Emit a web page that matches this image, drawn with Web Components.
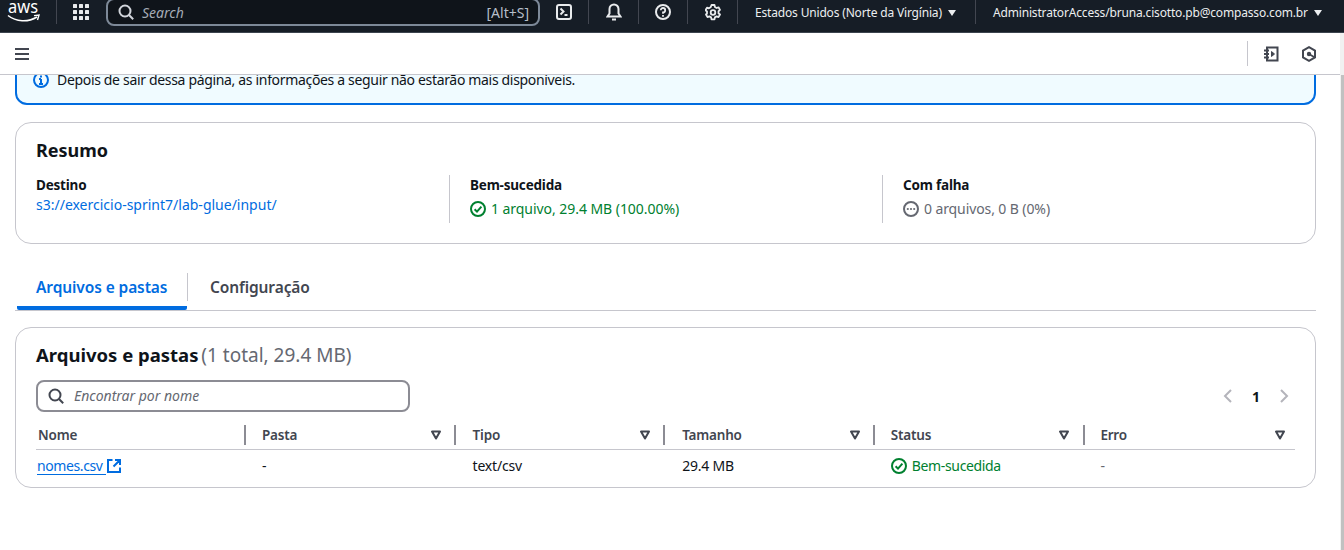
<!DOCTYPE html>
<html lang="pt"><head><meta charset="utf-8"><title>Status de upload</title>
<style>
html,body{margin:0;padding:0;height:550px;overflow:hidden;background:#fff}
body{font-family:"Noto Sans","Liberation Sans",sans-serif;font-size:14px;color:#0f141a}
</style></head><body>
<aws-app></aws-app>
<script>
const I={
 check:`<svg width="16" height="16" viewBox="0 0 16 16" fill="none" stroke="currentColor" stroke-width="2"><circle cx="8" cy="8" r="7"/><path d="M4.6 8.2 7 10.6l4.4-5"/></svg>`,
 more:`<svg width="16" height="16" viewBox="0 0 16 16" fill="none" stroke="currentColor" stroke-width="2"><circle cx="8" cy="8" r="7"/><g fill="currentColor" stroke="none"><circle cx="4.8" cy="8" r="1.1"/><circle cx="8" cy="8" r="1.1"/><circle cx="11.2" cy="8" r="1.1"/></g></svg>`,
 search:`<svg width="16" height="16" viewBox="0 0 16 16" fill="none" stroke="currentColor" stroke-width="2"><circle cx="7" cy="7" r="5.5"/><path d="m11 11 4.2 4.2"/></svg>`,
 filter:`<svg width="12" height="12" viewBox="0 0 12 12" fill="none" stroke="currentColor" stroke-width="2" stroke-linejoin="round"><path d="M2 2.5h8L6 9.5z"/></svg>`
};
function def(name,css,html){
 customElements.define(name,class extends HTMLElement{
  constructor(){super();this.attachShadow({mode:'open'}).innerHTML=`<style>${css}</style>${html}`;}
 });
}
def('top-nav',`
 :host{display:flex;align-items:center;height:24px;padding-bottom:8px;background:#161d26;border-bottom:1px solid #3c444e;color:#fff;font-size:12px;white-space:nowrap;flex:none}
 .logo{width:50px;padding-left:6px;height:24px;display:flex;flex:none}
 .sep{width:1px;height:24px;background:#424650;flex:none}
 .grid{margin:0 17px 0 16px;display:flex;color:#e9ebed;flex:none}
 .search{width:430px;height:24px;border:2px solid #7d8998;border-radius:8px;background:#0f141a;display:flex;align-items:center;color:#b6bec9;flex:none}
 .search svg{margin-left:10px;color:#d1d5db}
 .search i{margin-left:8px;font-size:14px;flex:1;color:#a4abb5}
 .search span{margin-right:9px;font-size:14px}
 .ic{height:24px;display:flex;align-items:center;justify-content:center;color:#e9ebed;flex:none}
 .w48{width:48px}.w49{width:49px}
 .t{color:#eceef0;letter-spacing:-.17px;margin-left:17px;flex:none}
 .tri{display:inline-block;width:0;height:0;border:4.5px solid transparent;border-top:6px solid #eceef0;border-bottom:0;margin-left:6px;vertical-align:1px}
`,`
 <div class="logo"><svg width="36" height="24" viewBox="0 0 36 24"><text x="2" y="12.500" font-family="Noto Sans,sans-serif" font-size="18" fill="#fff" textLength="30" lengthAdjust="spacingAndGlyphs">aws</text><path d="M2 15.500c8 6.500 20 7 29 1.500" fill="none" stroke="#fff" stroke-width="1.500"/><path d="M28 15.600 33 15 31.500 20" fill="none" stroke="#fff" stroke-width="1.400"/></svg></div>
 <div class="sep"></div>
 <div class="grid"><svg width="16" height="16" viewBox="0 0 16 16" fill="currentColor"><rect width="4" height="4" rx=".5"/><rect x="6" width="4" height="4" rx=".5"/><rect x="12" width="4" height="4" rx=".5"/><rect y="6" width="4" height="4" rx=".5"/><rect x="6" y="6" width="4" height="4" rx=".5"/><rect x="12" y="6" width="4" height="4" rx=".5"/><rect y="12" width="4" height="4" rx=".5"/><rect x="6" y="12" width="4" height="4" rx=".5"/><rect x="12" y="12" width="4" height="4" rx=".5"/></svg></div>
 <div class="search">${I.search}<i>Search</i><span>[Alt+S]</span></div>
 <div class="ic w48"><svg width="16" height="16" viewBox="0 0 16 16" fill="none" stroke="currentColor" stroke-width="2"><rect x="1" y="1" width="14" height="14" rx="2"/><path d="m4.500 4.500 3 3-3 3M8.500 11h3"/></svg></div><div class="sep"></div>
 <div class="ic w49"><svg width="16" height="18" viewBox="0 0 16 18" fill="none" stroke="currentColor" stroke-width="2"><path d="M1.500 13.500h13l-2-3V6a4.500 4.500 0 0 0-9 0v4.500zM6 16.500h4"/></svg></div><div class="sep"></div>
 <div class="ic w48"><svg width="16" height="16" viewBox="0 0 16 16" fill="none" stroke="currentColor" stroke-width="2"><circle cx="8" cy="8" r="7"/><path d="M5.800 6.200A2.200 2.200 0 1 1 8 8.400v1.300" stroke-width="1.800"/><path d="M8 11v1.800" stroke-width="1.800"/></svg></div><div class="sep"></div>
 <div class="ic w49"><svg width="16" height="17" viewBox="0 0 16 17" fill="none" stroke="currentColor" stroke-width="1.800" stroke-linejoin="round"><circle cx="8" cy="8.500" r="2.300"/><path d="M6.500 1h3l.4 2 1.700 1 1.900-.7 1.500 2.600-1.500 1.300v2l1.500 1.300-1.500 2.600-1.900-.7-1.700 1-.4 2h-3l-.4-2-1.700-1-1.900.7-1.500-2.600L2 9.500v-2L.5 6.200 2 3.600l1.900.7 1.700-1z"/></svg></div><div class="sep"></div>
 <div class="t" style="width:220px">Estados Unidos (Norte da Virgínia)<span class="tri"></span></div>
 <div class="sep"></div>
 <div class="t">AdministratorAccess/bruna.cisotto.pb@compasso.com.br<span class="tri"></span></div>
`);
def('sub-nav',`
 :host{display:flex;align-items:center;justify-content:space-between;height:41px;background:#fff;border-bottom:1px solid #c6c6cd;padding:0 19px 0 14px;color:#424650;flex:none}
 .r{display:flex;align-items:center}
 .sep{width:1px;height:25px;background:#c6c6cd;margin-right:15px}
 svg{display:block}
`,`
 <svg width="16" height="14" viewBox="0 0 16 14" stroke="currentColor" stroke-width="2"><path d="M1 2h14M1 7h14M1 12h14"/></svg>
 <div class="r"><div class="sep"></div>
 <svg width="16" height="16" viewBox="0 0 16 16" fill="none" stroke="currentColor" stroke-width="2" style="margin-right:22px"><path d="M4 1.500h10.500v13H4zM1 4.500h5M1 8h5M1 11.500h5"/><path d="m8.500 5.500 3 2.500-3 2.500z" fill="currentColor" stroke-width="1"/></svg>
 <svg width="16" height="16" viewBox="0 0 16 16" fill="none" stroke="currentColor" stroke-width="2" style="margin-right:4px"><path d="M8 1.200 14 4.500v7L8 14.800 2 11.500v-7z"/><circle cx="8" cy="8" r="2.200" fill="currentColor" stroke="none"/><path d="m8 8 5 3" stroke-width="1.800"/></svg></div>
`);
def('flash-info',`
 :host{display:flex;align-items:flex-start;gap:8px;margin:-40px 0 0;height:70px;box-sizing:border-box;border:2px solid #006ce0;border-radius:12px;background:#f0fbff;padding:33px 0 0 16px;line-height:20px;letter-spacing:-.33px;flex:none}
 svg{color:#006ce0;margin-top:2px;flex:none}
`,`<svg width="16" height="16" viewBox="0 0 16 16" fill="none" stroke="currentColor" stroke-width="2"><circle cx="8" cy="8" r="7"/><path d="M8 7v5M6 12h4M6 7h2"/><path d="M8 3.500v2"/></svg><slot></slot>`);
def('app-card',`
 :host{display:block;border:1px solid #c6c6cd;border-radius:16px;background:#fff;box-sizing:border-box;flex:none}
`,`<slot></slot>`);
def('sum-col',`
 :host{display:block;box-sizing:border-box;line-height:20px}
 .k{font-weight:700;font-size:13.500px;letter-spacing:-.2px;color:#0f141a}
`,`<div class="k"><slot name="k"></slot></div><slot></slot>`);
def('status-line',`
 :host{display:flex;align-items:center;gap:5px;line-height:20px;color:var(--c,#00802f)}
 svg{flex:none}
`,`${I.check}<slot></slot>`);
def('tab-bar',`
 :host{display:flex;height:67px;border-bottom:1px solid #c6c6cd;align-items:flex-start;box-sizing:border-box;flex:none}
 .t{font-weight:600;font-size:15.500px;letter-spacing:-.1px;line-height:20px;padding-top:33px;box-sizing:border-box;height:66px}
 .a{color:#006ce0;width:170px;margin-left:2px;padding-left:19px;border-bottom:4px solid #006ce0;border-radius:0 0 2px 2px}
 .sep{width:1px;height:28px;background:#c6c6cd;margin-top:29px}
 .b{color:#424650;margin-left:22px}
`,`<div class="t a">Arquivos e pastas</div><div class="sep"></div><div class="t b">Configuração</div>`);
def('files-table',`
 :host{display:block;padding:0 20px;line-height:20px;letter-spacing:-.2px}
 .row{display:grid;grid-template-columns:209px 209.600px 209.600px 209.600px 209.600px 211px}
 .h{height:29px;border-bottom:1px solid #c6c6cd;align-items:center}
 .h>div{display:flex;align-items:center;height:20px;font-weight:600;color:#424650;font-size:13.500px;padding:0 3px 0 18px;position:relative;justify-content:space-between}
 .h>div:first-child{padding-left:2px}
 .h>div:nth-child(2),.h>div:nth-child(5),.h>div:nth-child(6){padding-left:17px}
 .h>div:last-child{padding-right:0}
 .h>div+div::before{content:"";position:absolute;left:-1px;top:0;height:20px;width:2px;background:#8c8c94}
 .h>div:last-child::before{left:0}
 .h svg{color:#424650;margin-right:10px}
 .h>div:last-child svg{margin-right:8px}
 .b{height:32px;align-items:center}
 .b>div{padding-left:17px}
 .b>div:nth-child(3),.b>div:nth-child(4){padding-left:18px}
 .b>div:first-child{padding-left:1px;display:flex;align-items:center}
 a{color:#006ce0;border-bottom:1px solid #006ce0;line-height:16px;padding-right:3px;margin-top:1px;letter-spacing:-.4px}
 .b>div:first-child svg{margin-top:-1px}
 .g{color:#656871}
 status-line{letter-spacing:-.35px}
`,`
 <div class="row h"><div>Nome</div><div>Pasta${I.filter}</div><div>Tipo${I.filter}</div><div>Tamanho${I.filter}</div><div>Status${I.filter}</div><div>Erro${I.filter}</div></div>
 <div class="row b"><div><a>nomes.csv</a><svg width="16" height="16" viewBox="0 0 16 16" fill="none" stroke="#006ce0" stroke-width="2"><path d="M6.500 2H2v12h12V9.500M9 2h5v5M14 2 7.500 8.500"/></svg></div><div>-</div><div>text/csv</div><div>29.4 MB</div><div><status-line>Bem-sucedida</status-line></div><div class="g">-</div></div>
`);
def('aws-app',`
 :host{display:flex;flex-direction:column;height:550px;overflow:hidden}
 .wrap{flex:1;display:flex;min-height:0}
 main{flex:1;overflow:hidden;padding:0 24px 0 15px;display:flex;flex-direction:column;min-width:0}
 .scroll{width:4px;background:#f1f1f1;flex:none;padding-top:42px;box-sizing:border-box}
 .scroll div{height:100%;width:3px;margin-left:1px;background:#c1c1c1}
 .rail{flex:1;display:flex;flex-direction:column;min-width:0}
 h2{font-size:18.500px;font-weight:700;line-height:24px;margin:0}
 .sum{margin-top:17px;height:122px;padding:15px 20px 0}
 .sum h2{font-size:18px}
 .cols{display:grid;grid-template-columns:413px 433px 1fr;margin-top:13px;height:48px}
 .cols sum-col+sum-col{border-left:1px solid #c6c6cd;padding-left:20px}
 a{color:#006ce0}
 .st{margin-top:4px;letter-spacing:-.05px}
 .gr{margin-top:4px;display:flex;align-items:center;gap:5px;color:#656871;letter-spacing:-.1px}
 .files{margin-top:16px;height:161px;padding-top:15px}
 .files h2{padding-left:20px}
 .files h2 span{font-weight:400;color:#656871;font-size:19px;margin-left:-2px}
 .tools{display:flex;justify-content:space-between;align-items:center;padding:0 20px;margin-top:13px;height:32px}
 .find{width:370px;height:28px;border:2px solid #8c8c94;border-radius:8px;display:flex;align-items:center;color:#424650}
 .find svg{margin-left:10px}
 .find i{margin-left:10px;color:#656871;font-size:14px;line-height:18px;margin-top:-1px}
 .pg{display:flex;align-items:center;gap:18px;font-weight:700;color:#0f141a;margin-right:5px}
 .pg svg{color:#b4b4bb}
 files-table{margin-top:8px}
`,`
 <top-nav></top-nav>
 <div class="wrap"><div class="rail"><sub-nav></sub-nav>
 <main>
  <flash-info>Depois de sair dessa página, as informações a seguir não estarão mais disponíveis.</flash-info>
  <app-card class="sum"><h2>Resumo</h2>
   <div class="cols">
    <sum-col><span slot="k">Destino</span><a>s3://exercicio-sprint7/lab-glue/input/</a></sum-col>
    <sum-col><span slot="k">Bem-sucedida</span><status-line class="st">1 arquivo, 29.4 MB (100.00%)</status-line></sum-col>
    <sum-col><span slot="k">Com falha</span><div class="gr">${I.more}0 arquivos, 0 B (0%)</div></sum-col>
   </div>
  </app-card>
  <tab-bar></tab-bar>
  <app-card class="files"><h2>Arquivos e pastas <span>(1 total, 29.4 MB)</span></h2>
   <div class="tools"><div class="find">${I.search}<i>Encontrar por nome</i></div>
   <div class="pg"><svg width="12" height="16" viewBox="0 0 12 16" fill="none" stroke="currentColor" stroke-width="2"><path d="M9 2 3 8l6 6"/></svg><span>1</span><svg width="12" height="16" viewBox="0 0 12 16" fill="none" stroke="currentColor" stroke-width="2"><path d="m3 2 6 6-6 6"/></svg></div></div>
   <files-table></files-table>
  </app-card>
 </main></div><div class="scroll"><div></div></div></div>
`);
</script></body></html>
